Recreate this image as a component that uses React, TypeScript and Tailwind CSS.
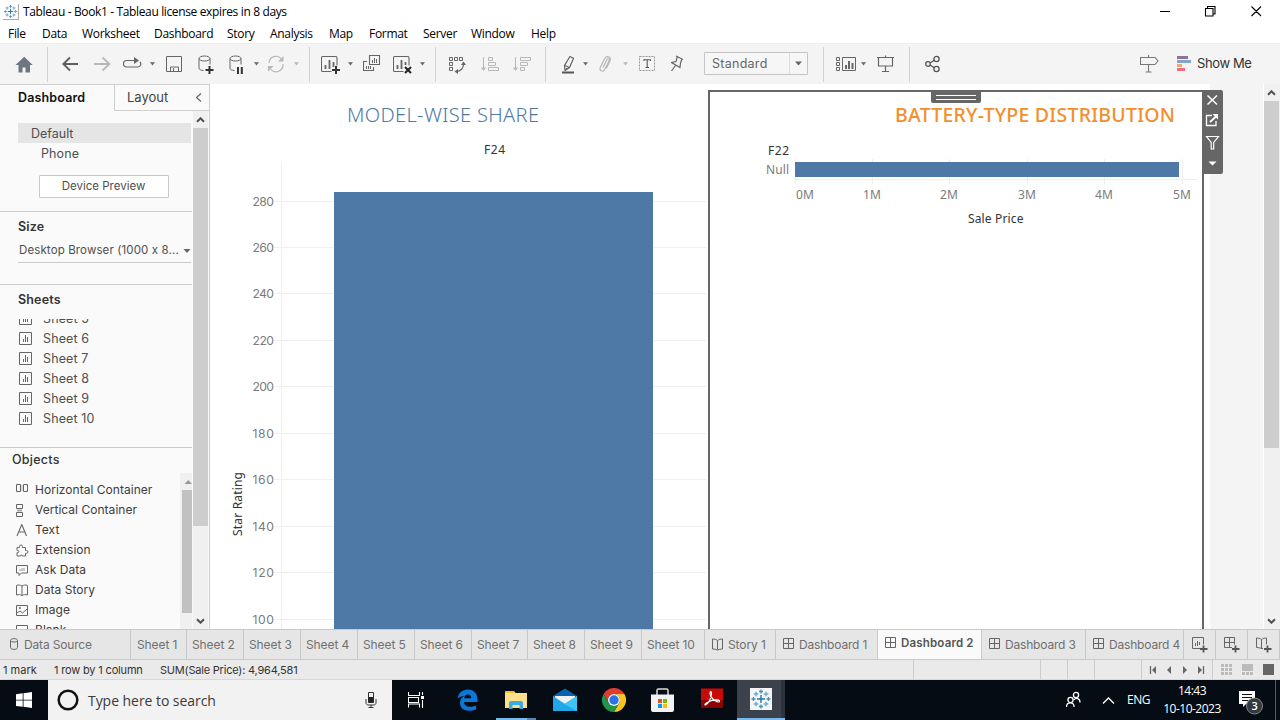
import type { ReactNode } from "react";

const SEGOE = "font-['Open_Sans','Noto_Sans',sans-serif]";

function Svg({ w, h = 20, className = "", children }: { w: number; h?: number; className?: string; children: ReactNode }) {
  return (
    <svg width={w} height={h} viewBox={`0 0 ${w} ${h}`} fill="none" className={`shrink-0 ${className}`}>
      {children}
    </svg>
  );
}

function Caret({ className = "", light = false }: { className?: string; light?: boolean }) {
  return (
    <Svg w={6} h={4} className={className}>
      <path d="M0 0.300h5L2.500 3.600z" fill={light ? "#b8b8b8" : "#666"} />
    </Svg>
  );
}

function Sep({ className = "" }: { className?: string }) {
  return <div className={`h-[35px] w-px shrink-0 bg-[#d2d2d2] ${className}`} />;
}

function TableauMark({ size, className = "" }: { size: number; className?: string }) {
  return (
    <svg width={size} height={size} viewBox="0 0 22 22" className={`shrink-0 ${className}`} fill="none">
      <path d="M11 7v8M7 11h8" stroke="#1f77a8" strokeWidth="1.4" />
      <path d="M11 1.5v4M9 3.5h4M11 16.5v4M9 18.5h4M1.5 11h4M3.5 9v4M16.5 11h4M18.5 9v4" stroke="#4a90b8" strokeWidth="1.3" />
      <path d="M6 3.7v4.6M3.7 6h4.6M16 3.7v4.6M13.7 6h4.6M6 13.7v4.6M3.7 16h4.6M16 13.7v4.6M13.7 16h4.6" stroke="#75aac8" strokeWidth="1.5" />
    </svg>
  );
}

function TitleBar() {
  return (
    <div className={`flex h-[23px] shrink-0 items-center bg-white pl-[3px] text-[12px] text-black ${SEGOE}`}>
      <div className="flex h-4 w-4 items-center justify-center border-r border-b border-[#aaa] bg-white">
        <TableauMark size={15} />
      </div>
      <span className="ml-[4px] text-[12px] tracking-[-0.36px] whitespace-pre">Tableau - Book1 - Tableau license expires in 8 days</span>
      <Svg w={104} h={14} className="-mt-[3px] mr-[17px] ml-auto">
        <path d="M1 8.500h10M46.500 5.500h7.500v7.500h-7.500zM48.500 5.500v-2h7.500v7.500h-2M92.500 3.500l9.500 9.500M102 3.500l-9.500 9.500" stroke="#000" strokeWidth="1.1" />
      </Svg>
    </div>
  );
}

function MenuBar() {
  const items: [string, string][] = [
    ["File", "w-[34px]"], ["Data", "w-[40px]"], ["Worksheet", "w-[72px]"], ["Dashboard", "w-[73px]"],
    ["Story", "w-[43px]"], ["Analysis", "w-[59px]"], ["Map", "w-[40px]"], ["Format", "w-[54px]"],
    ["Server", "w-[48px]"], ["Window", "w-[60px]"], ["Help", "w-[40px]"],
  ];
  return (
    <div className={`flex h-5 shrink-0 items-center bg-white pt-[2px] pl-2 text-[12px] tracking-[-0.3px] text-black ${SEGOE}`}>
      {items.map(([t, w]) => <span key={t} className={`${w} leading-5`}>{t}</span>)}
    </div>
  );
}

function Toolbar() {
  return (
    <div className="flex h-[41px] shrink-0 items-center border-t border-[#eee] bg-[#f4f4f4]">
      <Svg w={18} className="ml-[15px]">
        <path d="M9.200 2.800L0.500 11h3v7.500h4v-5h3v5h4.500V11h2.700z" fill="#6d7681" />
      </Svg>
      <Sep className="ml-[14px]" />
      <Svg w={17} className="ml-[14px]">
        <path d="M16 10H1.500M8 3.500L1.300 10 8 16.500" stroke="#5e5e5e" strokeWidth="1.8" />
      </Svg>
      <Svg w={17} className="ml-[15px]">
        <path d="M0 10h15.500M8.500 3.500l7 6.500-7 6.500" stroke="#b8b8b8" strokeWidth="1.8" />
      </Svg>
      <Svg w={20} className="ml-[12px]">
        <path d="M13.500 6.500H3.500a3 3 0 0 0-3 3v0.500a3 3 0 0 0 3 3h11.500a3 3 0 0 0 2-5" stroke="#666" strokeWidth="1.2" />
        <path d="M11 3l5 3.500-5 3.500z" fill="#666" />
      </Svg>
      <Caret className="ml-[7px]" />
      <Svg w={17} className="ml-[10px]">
        <path d="M0.500 2.500h15v15h-15zM4.500 17v-4h8v4M7.500 14v3" stroke="#666" />
      </Svg>
      <Svg w={17} className="ml-[15px]">
        <ellipse cx="6.500" cy="4.500" rx="5.500" ry="2.500" stroke="#666" />
        <path d="M1 4.500v9.800c0 1.200 2 2 4.500 2.200M12 4.500v6" stroke="#666" />
        <path d="M11.500 12v8M7.500 16h8" stroke="#333" strokeWidth="2" />
      </Svg>
      <Svg w={15} className="ml-[14px]">
        <ellipse cx="6.500" cy="4.500" rx="5.500" ry="2.500" stroke="#666" />
        <path d="M1 4.500v9.800c0 1.200 1.500 2 4.500 2.200M12 4.500v6" stroke="#666" />
        <path d="M9 13v7M12.800 13v7" stroke="#333" strokeWidth="2" />
      </Svg>
      <Caret className="ml-[10px]" />
      <Svg w={18} className="ml-[7px]">
        <path d="M2 9a7 7 0 0 1 12.500-4M16 10a7 7 0 0 1-12.500 5" stroke="#b8b8b8" strokeWidth="1.2" />
        <path d="M16.500 2v5.500H11zM1 17.500V12h5.500z" fill="#b8b8b8" />
      </Svg>
      <Caret light className="ml-[9px]" />
      <Sep className="ml-[9px]" />
      <Svg w={20} className="ml-[11px]">
        <path d="M10.500 17.500H1.500a1 1 0 0 1-1-1v-13a1 1 0 0 1 1-1h13.500a1 1 0 0 1 1 1v8" stroke="#666" strokeWidth="1.100" />
        <path d="M4.500 11v4M8.500 6v9M12.500 8v5" stroke="#666" strokeWidth="1.800" />
        <path d="M15 12v8M11 16h8" stroke="#333" strokeWidth="2" />
      </Svg>
      <Caret className="ml-[7px]" />
      <Svg w={18} className="ml-[9px]">
        <path d="M6.500 1.500h10v9h-10zM4 7.500H0.500v9h10V13" stroke="#666" strokeWidth="1.1" />
        <path d="M9.500 6v3M11.500 4v5M13.500 5v4M3.500 12v3M5.500 12v3M7.500 12v3" stroke="#666" />
      </Svg>
      <Svg w={20} className="ml-[12px]">
        <path d="M10.500 17.500H1.500a1 1 0 0 1-1-1v-13a1 1 0 0 1 1-1h13.500a1 1 0 0 1 1 1v8" stroke="#666" strokeWidth="1.100" />
        <path d="M4.500 11v4M8.500 6v9M12.500 8v3" stroke="#666" strokeWidth="1.800" />
        <path d="M12 13l6 6M18 13l-6 6" stroke="#222" strokeWidth="2" />
      </Svg>
      <Caret className="ml-[7px]" />
      <Sep className="ml-[9px]" />
      <Svg w={18} className="ml-[13px]">
        <path d="M0.500 3.500h3v3h-3zM5.500 3.500h3v3h-3zM10.500 3.500h3v3h-3zM0.500 8.500h3v3h-3zM0.500 13.500h3v3h-3z" stroke="#666" />
        <path d="M14.500 10c0 4-3 7.500-7 7.500" stroke="#666" strokeWidth="1.2" />
        <path d="M12 11l2.500-3.500L17 11zM9 15l-3.500 2.500L9 20z" fill="#666" />
      </Svg>
      <Svg w={20} className="ml-[14px]">
        <path d="M2.500 3v12M7.500 3.500h4v3h-4zM7.500 8.500h7v3h-7zM7.500 13.500h10v3h-10z" stroke="#b8b8b8" />
        <path d="M0 13.500h5L2.500 17z" fill="#b8b8b8" />
      </Svg>
      <Svg w={20} className="ml-[12px]">
        <path d="M2.500 3v12M7.500 3.500h10v3h-10zM7.500 8.500h7v3h-7zM7.500 13.500h4v3h-4z" stroke="#b8b8b8" />
        <path d="M0 13.500h5L2.500 17z" fill="#b8b8b8" />
      </Svg>
      <Sep className="ml-[12px]" />
      <Svg w={14} className="ml-[16px]">
        <path d="M8 2.500l3.500 1.700-4 9.300-4.500 3-0.500-5z M3 11.500l4.200 2M5 14l-2 2.500" stroke="#666" strokeWidth="1.200" />
        <path d="M0 18.500h12" stroke="#555" strokeWidth="2" />
      </Svg>
      <Caret className="ml-[7px]" />
      <Svg w={14} className="ml-[10px]">
        <path d="M4 13.500l4-8c1-1.800 3-0.500 2.200 1l-4.500 9c-1.500 3-6 1-4.500-2l4.500-9c2-3.500 7-1.500 5.500 2l-4 8" stroke="#b8b8b8" strokeWidth="1.200" />
      </Svg>
      <Caret light className="ml-[10px]" />
      <Svg w={17} className="ml-[10px]">
        <path d="M0.500 2.500h15v14h-15z" stroke="#999" strokeDasharray="2 1" />
        <path d="M5 7V5.700h6.500V7M8.200 6v7.500M6.500 13.500h3.500" stroke="#555" strokeWidth="1.1" />
      </Svg>
      <Svg w={14} className="ml-[15px]">
        <path d="M5 2l7 3.500M6.300 2.700L5 7.500 0.500 8.500l8.500 5 0.500-4.500L11 5M4.500 11.500L0.500 17" stroke="#666" strokeWidth="1.200" />
      </Svg>
      <div className="-mt-px ml-[19px] flex h-[23px] w-[104px] shrink-0 items-center rounded-[1px] border border-[#c4c4c4] bg-[#f6f6f6] font-['Inter',sans-serif]">
        <span className="w-[85px] border-r border-[#ddd] pl-[7px] text-[12.500px] leading-[21px] tracking-[0.27px] text-[#666]">Standard</span>
        <svg width="8" height="5" className="ml-[5px]"><path d="M0 0.500h7L3.500 4.500z" fill="#666" /></svg>
      </div>
      <Sep className="ml-[15px]" />
      <Svg w={21} className="ml-[12px]">
        <path d="M0.500 3.500h3v3h-3zM0.500 8.500h3v3h-3zM0.500 13.500h3v3h-3zM6.500 3.500h13v13h-13z" stroke="#666" />
        <path d="M10 11v4M13 7v8M16.500 9v6" stroke="#666" strokeWidth="2" />
      </Svg>
      <Caret className="ml-[4px]" />
      <Svg w={18} className="ml-[10px]">
        <path d="M0 3.500h17M1.500 3.500v8.500h14V3.500M8.500 1.500v2M8.500 12v5M5 17.500h7" stroke="#666" strokeWidth="1.200" />
      </Svg>
      <Sep className="ml-[14px]" />
      <Svg w={16} className="ml-[15px]">
        <g stroke="#555" strokeWidth="1.300">
          <circle cx="3" cy="10" r="2.300" /><circle cx="11.500" cy="5" r="2.600" /><circle cx="11.500" cy="15" r="2.600" />
          <path d="M5 9l4.300-2.700M5 11l4.300 2.700" />
        </g>
      </Svg>
      <Svg w={19} className="ml-[199px]">
        <path d="M0.500 3.500h14.500l3 3.500-3 3.500H0.500zM8.500 1v2.500M8.500 10.500v8M5.500 18h6" stroke="#777" strokeWidth="1.100" />
      </Svg>
      <Svg w={15} className="ml-[18px]">
        <path d="M0 2h11v3H0z" fill="#8c7399" /><path d="M0 6h14v3H0z" fill="#82a5cc" />
        <path d="M0 10h5v3H0z" fill="#f2a672" /><path d="M0 14h8v3H0z" fill="#f76c7c" />
      </Svg>
      <span className="ml-[5px] font-['Inter',sans-serif] text-[13px] tracking-[-0.4px] whitespace-nowrap text-[#333]">Show Me</span>
    </div>
  );
}

const SheetIcon = () => (
  <Svg w={13} h={13} className="-mt-px">
    <path d="M0.500 0.500h12v12h-12z" stroke="#666" />
    <path d="M4.500 7v3M6.500 3v7M8.500 5v5" stroke="#666" />
  </Svg>
);

const sheetRows = ["Sheet 5", "Sheet 6", "Sheet 7", "Sheet 8", "Sheet 9", "Sheet 10"];

const objectRows: [string, ReactNode][] = [
  ["Horizontal Container", <g key="i"><path d="M0.500 0.500h4v7h-4zM7.500 0.500h4v7h-4z" stroke="#666" /><path d="M6 1v6" stroke="#bbb" /></g>],
  ["Vertical Container", <g key="i"><path d="M0.500 0.500h6v4h-6zM0.500 8.500h6v4h-6z" stroke="#666" /><path d="M1 6.500h5" stroke="#aaa" strokeWidth="2" /></g>],
  ["Text", <path key="i" d="M1 12L5.800 0.500 10.500 12M2.700 8h6.300" stroke="#666" strokeWidth="1.100" />],
  ["Extension", <path key="i" d="M1 3.500h2.500v-1a1.500 1.500 0 0 1 3 0v1h3v3h1a1.400 1.400 0 0 1 0 2.800h-1v2.700H6.500a1 1 0 0 0-2 0H1V8.700h1a1.200 1.200 0 0 0 0-2.300H1z" stroke="#666" />],
  ["Ask Data", <g key="i"><path d="M0.500 1.500h11v7.500h-6l-2.500 2.500V9H0.500z" stroke="#666" /><path d="M4 5v2M6 4v3M8 4v3" stroke="#999" /></g>],
  ["Data Story", <path key="i" d="M0.500 1.500c2-1 4-0.500 5.500 0.500 1.500-1 3.500-1.500 5.500-0.500v9.500c-2-0.700-4-0.500-5.500 0.500-1.500-1-3.500-1.200-5.500-0.500zM6 2v9.500" stroke="#666" />],
  ["Image", <g key="i"><path d="M0.500 1.500h11v10h-11zM1 9l3-2 2.500 2 4.500-4" stroke="#666" /><circle cx="4" cy="4" r="1" fill="#666" /></g>],
  ["Blank", <path key="i" d="M0.500 1.500h11v9h-11z" stroke="#666" />],
];

function ScrollArrow({ up = false }: { up?: boolean }) {
  return (
    <Svg w={9} h={6}>
      <path d={up ? "M1 4.800L4.500 1.300 8 4.800" : "M1 1.200l3.500 3.500L8 1.200"} stroke="#505050" strokeWidth="2" />
    </Svg>
  );
}

function Sidebar() {
  return (
    <aside className="flex w-[210px] shrink-0 flex-col border-t border-r border-[#cfcfcf] bg-[#fafafa] font-['Inter',sans-serif] text-[13px] text-[#4f4f4f] [font-feature-settings:'calt'_0]">
      <div className="flex h-[26px] shrink-0">
        <div className="w-[114px] pl-[18px] text-[12.500px] leading-[25px] font-semibold tracking-[0.15px] text-[#111]">Dashboard</div>
        <div className="flex grow items-center border-b border-l border-[#cfcfcf] pl-[12px] text-[#444]">
          <span className="leading-[25px]">Layout</span>
          <Svg w={7} h={10} className="mr-[7px] ml-auto"><path d="M6 0.500L1.500 4.500 6 8.500" stroke="#666" strokeWidth="1.200" /></Svg>
        </div>
      </div>
      <div className="flex min-h-0 grow">
        <div className="flex w-[192px] shrink-0 flex-col overflow-hidden">
          <div className="mt-[12px] ml-[18px] h-5 w-[173px] shrink-0 bg-[#e5e5e5] pl-[13px] text-[12.500px] leading-[21px]">Default</div>
          <div className="h-5 shrink-0 pl-[41px] text-[12.500px] leading-[21px] tracking-[0.1px]">Phone</div>
          <div className="mt-[12px] ml-[39px] flex h-[23px] w-[130px] shrink-0 items-center justify-center rounded-[1px] border border-[#c8c8c8] bg-white pr-px text-[11.500px]">Device Preview</div>
          <div className="mt-[13px] flex h-[73px] shrink-0 flex-col border-t border-[#cbcbcb] pl-[18px]">
            <div className="mt-[5px] text-[12.500px] leading-[19px] font-semibold tracking-[0.15px] text-[#333]">Size</div>
            <div className="mt-[3px] flex h-[24px] w-[173px] items-center border-b border-[#cbcbcb] pt-px pl-px text-[11.500px] tracking-[0.12px] whitespace-nowrap">
              <span>Desktop Browser (1000 x 8...</span>
              <Svg w={8} h={5} className="ml-auto"><path d="M0.500 0h7L4 4z" fill="#666" /></Svg>
            </div>
          </div>
          <div className="flex h-[163px] shrink-0 flex-col border-t border-[#cbcbcb]">
            <div className="mt-[5px] pl-[18px] text-[12.500px] leading-[20px] font-semibold tracking-[0.15px] text-[#333]">Sheets</div>
            <div className="mt-[9px] flex h-[110px] flex-col justify-end overflow-hidden">
              {sheetRows.map((s) => (
                <div key={s} className="flex h-5 shrink-0 items-center pl-[19px]">
                  <SheetIcon />
                  <span className="ml-[11px] text-[12.500px] leading-5 tracking-[0.12px]">{s}</span>
                </div>
              ))}
            </div>
          </div>
          <div className="flex min-h-0 grow flex-col border-t border-[#cbcbcb]">
            <div className="h-[25px] shrink-0 pl-[12px] text-[12.500px] leading-[24px] font-medium tracking-[0.25px] text-[#333]">Objects</div>
            <div className="flex min-h-0 grow">
              <div className="flex w-[180px] flex-col overflow-hidden pt-[7px]">
                {objectRows.map(([t, icon]) => (
                  <div key={t} className="flex h-5 shrink-0 items-center pl-[16px]">
                    <Svg w={13} h={13}>{icon}</Svg>
                    <span className="ml-[6px] text-[12px] leading-5 tracking-[0.03px] whitespace-nowrap text-[#3d3d3d]">{t}</span>
                  </div>
                ))}
              </div>
              <div className="flex w-[12px] flex-col bg-[#f0f0f0] pl-[2px]">
                <Svg w={10} h={17}><path d="M2.500 11h7.500L6.300 7z" fill="#999" /></Svg>
                <div className="h-[123px] bg-[#c1c1c1]" />
              </div>
            </div>
          </div>
        </div>
        <div className="ml-px flex w-[15px] flex-col items-center bg-[#f0f0f0]">
          <div className="flex h-[17px] shrink-0 items-center"><ScrollArrow up /></div>
          <div className="h-[398px] w-full shrink-0 bg-[#cdcdcd]" />
          <div className="mt-auto flex h-[17px] items-center"><ScrollArrow /></div>
        </div>
      </div>
    </aside>
  );
}

const AXIS = [280, 260, 240, 220, 200, 180, 160, 140, 120, 100];
const SALE = [0, 1, 2, 3, 4, 5];

function StarRatingChart() {
  return (
    <svg width="498" height="545" viewBox="210 84 498 545" className="shrink-0 font-['Noto_Sans','Open_Sans',sans-serif]">
      <text x="347" y="122" fontSize="20" fontWeight="350" fill="#4e79a7" textLength="192">MODEL-WISE SHARE</text>
      <text x="484" y="154" fontSize="12" fill="#333" textLength="21">F24</text>
      <path d="M281.500 161v468" stroke="#eee" />
      {AXIS.map((v, i) => {
        const y = Math.floor(201 + i * 46.45) + 0.5;
        return (
          <g key={v}>
            <path d={`M274 ${y}H706`} stroke="#f0f0f0" />
            <text x="252.500" y={y + 4.5} fontSize="12.200" fill="#7b7b7b" textLength="21.500" className="font-['Inter',sans-serif]">{v}</text>
          </g>
        );
      })}
      <rect x="334" y="192" width="319" height="437" fill="#4e79a7" />
      <text transform="translate(242 536) rotate(-90)" fontSize="12" fill="#333" textLength="64">Star Rating</text>
    </svg>
  );
}

function BatteryChart() {
  return (
    <svg width="492" height="537" viewBox="710 92 492 537" className="font-['Noto_Sans','Open_Sans',sans-serif]">
      <text x="895" y="122" fontSize="19.500" fontWeight="500" fill="#f28e2b" textLength="280">BATTERY-TYPE DISTRIBUTION</text>
      <text x="768" y="155" fontSize="12" fill="#333" textLength="21">F22</text>
      <text x="766" y="174" fontSize="12" fill="#7b7b7b" textLength="23">Null</text>
      <path d="M795 179.500h402" stroke="#eee" />
      {SALE.map((v) => {
        const x = Math.floor(795 + v * 77.4) + 0.5;
        return (
          <g key={v}>
            <path d={`M${x} 159v25`} stroke="#eee" />
            <text x={v === 0 ? 796 : x - 9.5} y="199" fontSize="12" fill="#7b7b7b" textLength="18">{`${v}M`}</text>
          </g>
        );
      })}
      <rect x="795" y="162" width="384" height="15" fill="#4e79a7" />
      <text x="968" y="223" fontSize="12" fill="#333" textLength="55.500">Sale Price</text>
    </svg>
  );
}

function Workspace() {
  return (
    <main className="flex min-w-0 grow bg-white">
      <StarRatingChart />
      <div className="mt-[6px] w-[496px] shrink-0 border-2 border-b-0 border-[#666]">
        <div className="relative">
          <BatteryChart />
          <div className="absolute top-0 left-[221px] flex h-[11px] w-[50px] flex-col items-center gap-[3px] rounded-b-[2px] bg-[#666] pt-[3px]">
            <div className="h-px w-10 bg-white" />
            <div className="h-px w-10 bg-white" />
          </div>
        </div>
      </div>
      <div className="relative w-[6px] shrink-0">
        <div className="absolute top-[6px] -left-px z-10 h-[84px] w-5 rounded-r-[2px] bg-[#666]">
          <Svg w={20} h={84}>
            <path d="M4.500 5.500l9.500 9M14 5.500l-9.500 9" stroke="#fff" strokeWidth="1.500" />
            <path d="M9 25.500H3.500v10h9.500v-4.500" stroke="#fff" strokeWidth="1.300" />
            <path d="M7 32l6-5.500" stroke="#fff" strokeWidth="1.800" /><path d="M9.500 24H15v5.500z" fill="#fff" />
            <path d="M3.500 46.500h12l-4.800 6v6.500h-2.500v-6.500z" stroke="#fff" strokeWidth="1.200" />
            <path d="M5.500 71.500h8L9.500 75.500z" fill="#fff" />
          </Svg>
        </div>
      </div>
      <div className="w-[53px] shrink-0 bg-[#f4f4f4]" />
      <div className="ml-px flex w-[16px] shrink-0 flex-col items-center bg-[#f0f0f0] pr-px">
        <div className="flex h-[17px] shrink-0 items-center"><ScrollArrow up /></div>
        <div className="h-[347px] w-[15px] shrink-0 bg-[#cdcdcd]" />
        <div className="mt-auto flex h-[17px] items-center"><ScrollArrow /></div>
      </div>
    </main>
  );
}

const GridGlyph = () => (
  <Svg w={12} h={12} className="-mt-px"><path d="M0.500 0.500h10v10h-10zM5.500 0.500v10M0.500 5.500h10" stroke="#666" /></Svg>
);
const BookGlyph = () => (
  <Svg w={12} h={13}><path d="M0.500 1c2 0 3.500 0.300 5 1.500 1.500-1.200 3-1.500 5-1.500v10c-2 0-3.500 0.300-5 1-1.500-0.700-3-1-5-1zM5.500 2.500v9" stroke="#666" /></Svg>
);
const PlusGlyph = <path d="M11.500 8.500v7M8 12h7.500" stroke="#555" strokeWidth="1.800" />;

function SheetTabs() {
  const tabs: [string, string][] = [
    ["Sheet 1", "w-[56px] pl-[6px]"], ["Sheet 2", "w-[57px] pl-[5px]"], ["Sheet 3", "w-[57px] pl-[5px]"], ["Sheet 4", "w-[57px] pl-[5px]"],
    ["Sheet 5", "w-[57px] pl-[5px]"], ["Sheet 6", "w-[57px] pl-[5px]"], ["Sheet 7", "w-[56px] pl-[5px]"], ["Sheet 8", "w-[57px] pl-[5px]"],
    ["Sheet 9", "w-[57px] pl-[5px]"], ["Sheet 10", "w-[63px] pl-[5px]"],
  ];
  const boards: [string, string, ReactNode][] = [
    ["Story 1", "w-[71px] pl-[7px] tracking-[-0.100px]", <BookGlyph key="g" />],
    ["Dashboard 1", "w-[102px] pl-[7px] tracking-[-0.180px]", <GridGlyph key="g" />],
    ["Dashboard 2", "w-[104px] pl-[7px] bg-[#fafafa] font-semibold text-[#555] text-[11.500px] tracking-[0.180px] pb-[2px]", <GridGlyph key="g" />],
    ["Dashboard 3", "w-[104px] pl-[7px] tracking-[-0.180px]", <GridGlyph key="g" />],
    ["Dashboard 4", "w-[98px] pl-[7px] tracking-[-0.180px]", <GridGlyph key="g" />],
  ];
  return (
    <div className="flex h-[31px] shrink-0 border-y border-[#c9c9c9] bg-[#e6e6e6] font-['Inter',sans-serif] text-[12px] whitespace-nowrap text-[#707070]">
      <div className="flex w-[131px] shrink-0 items-center border-r border-[#c9c9c9] pl-[10px]">
        <Svg w={9} h={12} className="-mt-[2px]"><path d="M0.500 2.500c0-2.500 7-2.500 7 0v7c0 2.500-7 2.500-7 0zM0.500 2.500c0 2 7 2 7 0" stroke="#666" /></Svg>
        <span className="ml-[5px] tracking-[-0.160px]">Data Source</span>
      </div>
      {tabs.map(([t, w]) => (
        <div key={t} className={`flex shrink-0 items-center border-r border-[#c9c9c9] tracking-[-0.100px] ${w}`}>{t}</div>
      ))}
      {boards.map(([t, w, g]) => (
        <div key={t} className={`flex shrink-0 items-center gap-[4px] border-r border-[#c9c9c9] ${w}`}>{g}<span>{t}</span></div>
      ))}
      <div className="flex w-[32px] shrink-0 items-center justify-center border-r border-[#c9c9c9]">
        <Svg w={16} h={16}><path d="M8 11.500H0.500v-11h11v7M3.500 6v3M5.500 4v5M7.500 5v3" stroke="#666" />{PlusGlyph}</Svg>
      </div>
      <div className="flex w-[32px] shrink-0 items-center justify-center border-r border-[#c9c9c9]">
        <Svg w={16} h={16}><path d="M8 10.500H0.500v-10h10v7M5.500 0.500v10M0.500 5.500h10" stroke="#666" />{PlusGlyph}</Svg>
      </div>
      <div className="flex w-[32px] shrink-0 items-center justify-center border-r border-[#c9c9c9]">
        <Svg w={16} h={16}><path d="M7 11.500H5.500c-1.500-0.700-3-1-5-1V1c2 0 3.500 0.300 5 1.500C7 1.300 8.500 1 10.500 1v6.500M5.500 2.500v9" stroke="#666" />{PlusGlyph}</Svg>
      </div>
    </div>
  );
}

function StatusBar() {
  return (
    <div className="flex h-5 shrink-0 border-b border-[#d8d8d8] bg-[#eaeaea] font-['Inter',sans-serif] text-[11px] leading-5 whitespace-nowrap text-[#333]">
      <span className="ml-[3px] w-[51px]">1 mark</span>
      <span className="w-[106px] tracking-[-0.170px]">1 row by 1 column</span>
      <span className="tracking-[-0.200px]">SUM(Sale Price): 4,964,581</span>
      <div className="ml-auto flex">
        <div className="w-[127px] border-l border-[#ccc]" />
        <div className="w-[27px] border-l border-[#ccc]" />
        <div className="w-[27px] border-l border-[#ccc]" />
        <div className="w-[47px] border-l border-[#ccc]" />
        <div className="w-[71px] border-l border-[#ccc]">
          <Svg w={70} h={20}>
            <path d="M8.500 6v8M61.500 6v8" stroke="#666" strokeWidth="1.300" />
            <path d="M14 6v8l-4-4zM29 6v8l-4-4zM41 6v8l4-4zM56 6v8l4-4z" fill="#666" />
          </Svg>
        </div>
        <div className="w-[68px] border-l border-[#ccc]">
          <Svg w={67} h={20}>
            <path d="M8 4h3v3H8zM12 4h3v3h-3zM16 4h3v3h-3zM8 8h3v3H8zM12 8h3v3h-3zM16 8h3v3h-3zM8 12h3v3H8zM12 12h3v3h-3zM16 12h3v3h-3zM29 4h11v7H29zM29 12h3v3h-3zM33 12h3v3h-3zM37 12h3v3h-3z" fill="#bbb" />
            <path d="M50 4h11v11H50z" fill="#666" />
          </Svg>
        </div>
      </div>
    </div>
  );
}

function Taskbar() {
  return (
    <div className={`flex h-10 shrink-0 bg-[#060c14] text-white ${SEGOE}`}>
      <div className="flex w-12 items-center justify-center">
        <Svg w={16} h={16}><path d="M0 2.300l6.700-1v6.400H0zM7.500 1.200L16 0v7.700H7.500zM0 8.400h6.700v6.400L0 13.900zM7.500 8.400H16V16l-8.500-1.200z" fill="#fff" /></Svg>
      </div>
      <div className="flex w-[344px] items-center bg-[#f2f2f2] pl-[9px]">
        <Svg w={22} h={22}><circle cx="11" cy="11" r="9.300" stroke="#111" strokeWidth="2.500" /></Svg>
        <span className="ml-[9px] text-[14px] tracking-[-0.050px] text-[#3a3a3a]">Type here to search</span>
        <Svg w={12} h={18} className="mr-[15px] ml-auto">
          <path d="M3.500 1.500h5v10h-5z" stroke="#333" /><path d="M3.500 6h5v5.500h-5z" fill="#222" />
          <path d="M1 8v4c0 1 1 2 2 2h6c1 0 2-1 2-2V8M6 14v2.500M3.500 16.500h5" stroke="#333" />
        </Svg>
      </div>
      <div className="flex w-12 items-center justify-center">
        <Svg w={17} h={16}><path d="M0.500 0v3.500h11V0M0.500 15.500V12h11v3.500M0.500 5.500h10v5h-10zM14.500 0v3M14.500 8v8" stroke="#fff" strokeWidth="1.100" /><path d="M13 4h3v3h-3z" fill="#fff" /></Svg>
      </div>
      <div className="flex w-[56px] items-center pl-[17px]">
        <Svg w={21} h={22}>
          <path d="M0.500 9.500C1.500 3.500 6 0.500 11 0.500c6 0 9.500 4.500 9.500 9.500v3H7c0.300 3.500 3 4.800 6 4.800 2.300 0 4.500-0.600 6-1.600v4.300c-2 1-4.500 1.300-7 1.300-5.500 0-9-3-9-8C3 10.500 4.800 8 7.500 7 4.500 7 2 8 0.500 9.500zM7.200 9.300h7c0-2-1-3.800-3.500-3.800-2 0-3.300 1.500-3.500 3.800z" fill="#0a78d7" />
        </Svg>
      </div>
      <div className="flex w-10 flex-col items-center">
        <Svg w={22} h={18} className="mt-[11px]">
          <path d="M0 0h9l1.500 2H22v15H0z" fill="#ffe08a" /><path d="M0 0h9v2H0z" fill="#f5bd35" />
          <path d="M4 18v-6c0-1 1-2 2-2h10c1 0 2 1 2 2v6h-3.500v-4h-7v4z" fill="#3aabe2" />
        </Svg>
        <div className="mt-auto flex h-[2px] w-10 bg-[#5687b3]"><div className="w-[31px] bg-[#76b9ed]" /></div>
      </div>
      <div className="flex w-[58px] items-center pl-[17px]">
        <Svg w={24} h={24}>
          <path d="M0 8L12 0.500l12 7.500v3H0z" fill="#0a61ad" /><path d="M2 8h20v6l-10 5L2 15z" fill="#f0f0f0" />
          <path d="M0 8l12 8L24 8v15H0z" fill="#1fa7e8" /><path d="M24 8L11 16l13 7z" fill="#3fc5f5" />
        </Svg>
      </div>
      <div className="flex w-12 items-center pl-[8px]">
        <Svg w={24} h={24}>
          <path d="M1.600 6A12 12 0 0 1 22.400 6H12a6 6 0 0 0-5.200 9z" fill="#e33b2e" />
          <path d="M22.400 6A12 12 0 0 1 12 24l5.200-9A6 6 0 0 0 12 6z" fill="#fcc31e" />
          <path d="M12 24A12 12 0 0 1 1.600 6l5.200 9a6 6 0 0 0 10.400 0z" fill="#219648" />
          <circle cx="12" cy="12" r="6" fill="#fff" /><circle cx="12" cy="12" r="4.700" fill="#2b73e8" />
        </Svg>
      </div>
      <div className="flex w-[50px] items-center pl-[9px]">
        <Svg w={23} h={25}>
          <path d="M6 7V2.500c0-1 0.500-1.500 1.500-1.500h8c1 0 1.500 0.500 1.500 1.500V7" stroke="#ddd" strokeWidth="1.500" />
          <path d="M0 6.500h23V22c0 1-1 2-2 2H2c-1 0-2-1-2-2z" fill="#f2f2f2" />
          <path d="M7 11h4v4H7z" fill="#e84e2c" /><path d="M12 11h4v4h-4z" fill="#7db700" /><path d="M7 16h4v4H7z" fill="#049fe3" /><path d="M12 16h4v4h-4z" fill="#fdb813" />
        </Svg>
      </div>
      <div className="flex w-[45px] pt-[8px] pl-[9px]">
        <Svg w={22} h={20}>
          <path d="M0 0.500h22v19H0z" fill="#c90808" /><path d="M0 12h22v7.500H0z" fill="#8f0505" />
          <path d="M4.500 17c2-1 6-6 6-11.500 0-2.500-1.500-2.500-1.500 0 0 4 5 8 8.500 8.500 1.500 0 1.500-1.500 0-1.800-4-0.700-9 0.800-12 2.800-1.500 1-2 2-1 2z" stroke="#fff" strokeWidth="1.200" />
        </Svg>
      </div>
      <div className="flex w-12 flex-col items-center border-r-4 border-[#2c333c] bg-[#3b424b]">
        <div className="mt-[8px] ml-[3px] h-[22px] w-[22px] bg-[#f3f5f7]"><TableauMark size={22} /></div>
        <div className="mt-auto -mr-1 h-[2px] w-12 bg-[#76b9ed]" />
      </div>
      <div className="ml-auto flex w-[214px] items-center text-[12px]">
        <Svg w={16} h={18}>
          <g stroke="#fff" strokeWidth="1.300"><circle cx="10" cy="4" r="2.600" /><circle cx="4.500" cy="9" r="2.600" /><path d="M0.500 16c0-5.500 7.600-5.500 7.600 0M8 9c1.500-2.500 6-2 6 2.500" /></g>
        </Svg>
        <Svg w={13} h={9} className="ml-[20px]"><path d="M1 7.500L6.500 2 12 7.500" stroke="#fff" strokeWidth="1.300" /></Svg>
        <span className="ml-[12px] w-[27px] tracking-[-0.500px]">ENG</span>
        <div className="ml-[8px] flex w-[60px] flex-col items-center text-[12px] leading-[18px] tracking-[-0.500px] whitespace-nowrap">
          <span>14:43</span>
          <span>10-10-2023</span>
        </div>
        <Svg w={26} h={26} className="mt-[4px] ml-[16px]">
          <path d="M1 2h16v13H8l-3 3v-3H1z" fill="#fff" /><path d="M4 5.500h10M4 8.500h10M4 11.500h6" stroke="#111" />
          <circle cx="16.500" cy="17" r="8" fill="#333940" stroke="#888" />
          <text x="13.500" y="21" fontSize="11" fontWeight="600" fill="#fff">3</text>
        </Svg>
        <div className="ml-[11px] h-10 w-px bg-[#555a60]" />
      </div>
    </div>
  );
}

export default function App() {
  return (
    <div className="flex h-[720px] w-[1280px] flex-col overflow-hidden bg-white">
      <TitleBar />
      <MenuBar />
      <Toolbar />
      <div className="flex min-h-0 grow">
        <Sidebar />
        <Workspace />
      </div>
      <SheetTabs />
      <StatusBar />
      <Taskbar />
    </div>
  );
}
